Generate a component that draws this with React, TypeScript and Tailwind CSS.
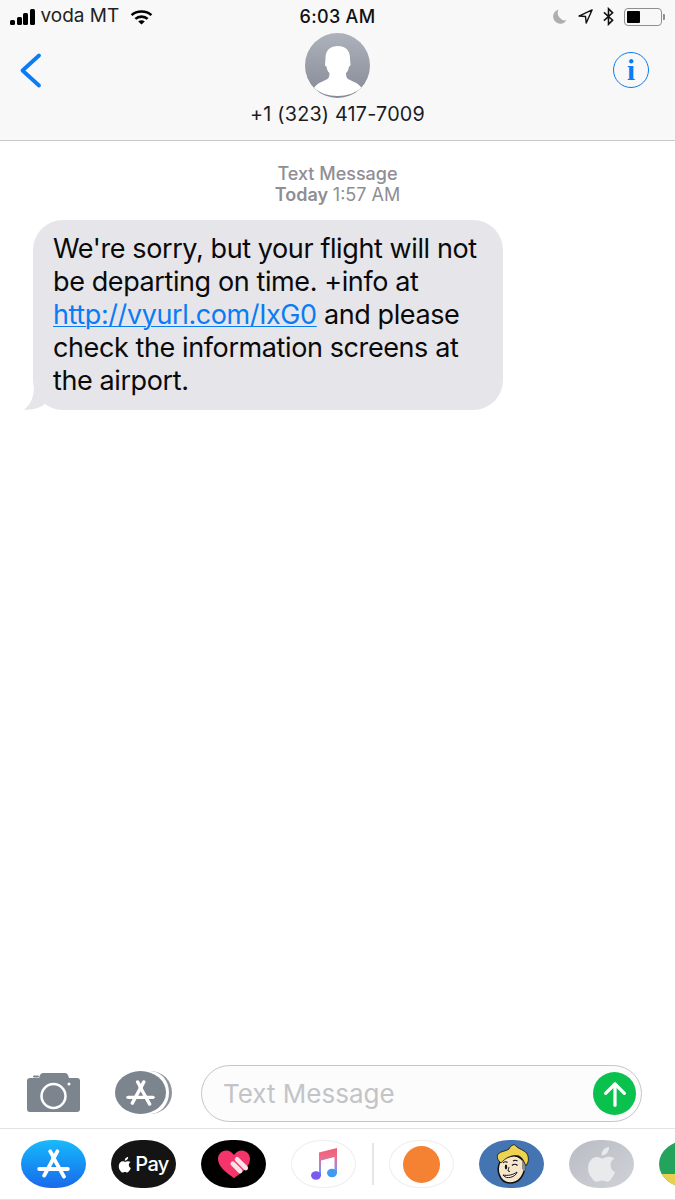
const sans = "font-['Inter','Liberation_Sans',sans-serif]";

const applePath =
  "M11 1c.1 1.2-.4 2.200-1 3-.7.8-1.700 1.300-2.700 1.200C7.200 4.100 7.700 3 8.300 2.300 9 1.500 10.100 1 11 1zM13.700 6.800c-1.500.9-1.900 2.100-1.900 3.300 0 1.500.8 2.800 2.200 3.400-.4 1.100-.9 2.100-1.600 3.100-.7.9-1.300 1.800-2.400 1.800-1 0-1.400-.6-2.600-.6s-1.600.6-2.600.6c-1.100 0-1.800-1-2.500-2C1 15 .3 12.800.6 10.600.9 8 2.800 6 5 6c1.100 0 2 .7 2.800.7.7 0 1.700-.8 3-.8 1.100 0 2.200.3 2.900.9z";

function AppStoreGlyph({ className = "" }: { className?: string }) {
  return (
    <svg viewBox="0 0 30 27" className={className} fill="none" stroke="currentColor" strokeWidth="3.5" strokeLinecap="round">
      <path d="M12 2 L15.500 8" />
      <path d="M18.500 2 L6.500 24" />
      <path d="M14.500 7 L24.500 25" />
      <path d="M2 18 H28" />
    </svg>
  );
}

function StatusBar() {
  return (
    <div className="flex h-[33px] items-center justify-between px-[10px] text-black">
      <div className="flex w-[200px] items-center">
        <div className="flex items-end gap-[1.5px]">
          <span className="h-[5px] w-[5px] rounded-[1.5px] bg-black" />
          <span className="h-[8px] w-[5px] rounded-[1.5px] bg-black" />
          <span className="h-[12px] w-[5px] rounded-[1.5px] bg-black" />
          <span className="h-[16px] w-[5px] rounded-[1.5px] bg-black" />
        </div>
        <span className="ml-[6px] text-[19px] text-[#222]">voda MT</span>
        <svg viewBox="0 0 24 17" className="ml-[11px] h-[16px] w-[23px]" fill="none" stroke="black" strokeWidth="2.800">
          <path d="M1.500 6.500C7 1.300 17 1.300 22.500 6.500" />
          <path d="M5.500 10.500C9 7.300 15 7.300 18.500 10.500" />
          <path d="M8.500 13.200l3.500 3.300 3.500-3.300c-2-1.700-5-1.700-7 0z" fill="black" stroke="none" />
        </svg>
      </div>
      <span className="text-[18px] font-medium tracking-[0.3px] text-[#111]">6:03 AM</span>
      <div className="flex w-[200px] items-center justify-end">
        <svg viewBox="0 0 16 16" className="h-[15px] w-[15px]" fill="#aeaeb0">
          <path d="M7 .5A7.700 7.700 0 1 0 15.500 12 8 8 0 0 1 7 .5z" />
        </svg>
        <svg viewBox="0 0 16 16" className="ml-[11px] h-[15px] w-[15px]" fill="none" stroke="#111" strokeWidth="1.500" strokeLinejoin="round">
          <path d="M15 1 L1 7.500 L8 8 L8.800 15 Z" />
        </svg>
        <svg viewBox="0 0 12 20" className="ml-[10px] h-[19px] w-[11px]" fill="none" stroke="#111" strokeWidth="1.700">
          <path d="M1 5.500 L10.500 14 L6 18.500 V1.500 L10.500 6 L1 14.500" />
        </svg>
        <div className="ml-[10px] flex h-[18px] w-[38px] items-center rounded-[4px] border border-[#8e8e8e] p-[2px]">
          <span className="h-full w-[13px] rounded-[1px] bg-black" />
        </div>
        <span className="ml-[1px] h-[6px] w-[2px] rounded-r-[1px] bg-[#8e8e8e]" />
      </div>
    </div>
  );
}

function Header() {
  return (
    <header className="relative h-[141px] shrink-0 border-b border-[#c9c9cb] bg-[#f8f8f8]">
      <StatusBar />
      <div className="flex flex-col items-center">
        <div className="relative h-[65px] w-[65px] overflow-hidden rounded-full bg-gradient-to-b from-[#aeb2bc] to-[#858a96]">
          <svg viewBox="0 0 65 65" className="h-full w-full" fill="white">
            <path d="M33 13c7 0 12 4 12 12 0 3 .5 5 .5 6.500s-1 1.500-1.500 2c-.5 3-1 5-3 6.500 0 3 .5 5 2 6 3 2 8 3 11 6 1 1 2 2 2.500 3C50 60 42 63 32.500 63S15 60 9 55c.5-1 1.500-2 2.500-3 3-3 8-4 11-6 1.500-1 2-3 2-6-2-1.500-2.500-3.500-3-6.500-.5-.5-1.500-.5-1.500-2s.5-3.500.5-6.500c0-8 5-12 12.500-12z" />
          </svg>
        </div>
        <span className="mt-[5px] text-[19.8px] leading-[23px] tracking-[0.2px] text-[#1c1c1e]">+1 (323) 417-7009</span>
      </div>
      <svg viewBox="0 0 24 38" className="absolute left-[18px] top-[52px] h-[38px] w-[24px]" fill="none" stroke="#0a7cf5" strokeWidth="3.800" strokeLinecap="round" strokeLinejoin="round">
        <path d="M21 3.500 L4.500 18.500 L21 33.500" />
      </svg>
      <div className="absolute left-[613px] top-[52px] flex h-[36px] w-[36px] items-center justify-center rounded-full border-[1.5px] border-[#0a7cf5]">
        <span className="font-['Liberation_Serif',serif] text-[29px] font-bold leading-none text-[#0a7cf5]">i</span>
      </div>
    </header>
  );
}

function Message() {
  return (
    <main className="flex-1 bg-white">
      <div className="pt-[22px] text-center text-[18px] font-medium leading-[21px] text-[#8e8e93]">
        <p>Text Message</p>
        <p>
          <span className="font-semibold">Today</span> <span className="font-normal">1:57 AM</span>
        </p>
      </div>
      <div className="relative ml-[33px] mt-[15px] h-[190px] w-[470px] rounded-[30px] bg-[#e5e5ea] pl-[20px] pt-[12px] text-[27px] leading-[33px] text-[#0a0a0a]">
        <svg viewBox="0 0 24 24" className="absolute bottom-0 left-[-9px] h-[24px] w-[24px]" fill="#e5e5ea">
          <path d="M10 0 C10 10 7 19 0 23.500 C8 24.500 15 22 20 19 L24 0 Z" />
        </svg>
        <p className="relative tracking-[-0.4px]">
          We're sorry, but your flight will not
          <br />
          be departing on time. +info at
          <br />
          <span className="text-[#0a7cf5] underline decoration-1 underline-offset-2">http://vyurl.com/IxG0</span> and please
          <br />
          check the information screens at
          <br />
          the airport.
        </p>
      </div>
    </main>
  );
}

function Composer() {
  return (
    <div className="flex h-[87px] shrink-0 items-start border-b border-[#e3e3e5] bg-white pt-[23px]">
      <svg viewBox="0 0 53 40" className="ml-[27px] mt-[7px] h-[40px] w-[53px]">
        <path fill="#7c848e" d="M3 6h9l1-3q1-2 3-2h22q2 0 3 2l1 3h8q3 0 3 3v28q0 3-3 3H3q-3 0-3-3V9q0-3 3-3z" />
        <circle cx="26.500" cy="24" r="12" fill="none" stroke="white" strokeWidth="2.500" />
        <rect x="6" y="3.500" width="6" height="2" rx="1" fill="#7c848e" />
        <circle cx="42" cy="12" r="1.500" fill="white" />
      </svg>
      <div className="relative ml-[35px] mt-[6px] h-[43px] w-[57px]">
        <span className="absolute left-[14px] top-0 h-[43px] w-[43px] rounded-full border-r-[3px] border-[#8d949d]" />
        <span className="absolute left-0 top-0 flex h-[43px] w-[51px] items-center justify-center rounded-[50%] bg-[#7c848e] text-white">
          <AppStoreGlyph className="h-[26px] w-[29px]" />
        </span>
      </div>
      <div className="ml-[29px] flex h-[57px] w-[441px] items-center justify-between rounded-[28.5px] border-[1.5px] border-[#c6c6ca] bg-[#fcfcfc] pl-[21px] pr-[5px]">
        <span className="text-[26px] text-[#c3c4c7]">Text Message</span>
        <span className="flex h-[43px] w-[43px] items-center justify-center rounded-full bg-[#0ac14d]">
          <svg viewBox="0 0 24 24" className="h-[30px] w-[30px]" fill="none" stroke="white" strokeWidth="2.600" strokeLinecap="round" strokeLinejoin="round">
            <path d="M12 21V4" />
            <path d="M4.500 11.500 12 4l7.500 7.500" />
          </svg>
        </span>
      </div>
    </div>
  );
}

function AppPill({ className, children }: { className: string; children?: React.ReactNode }) {
  return <div className={`flex h-[48px] w-[65px] shrink-0 items-center justify-center overflow-hidden rounded-[30px/24px] ${className}`}>{children}</div>;
}

function AppStrip() {
  return (
    <div className="flex h-[71px] shrink-0 items-start overflow-hidden border-b border-[#e3e3e5] bg-white pl-[21px] pt-[11px]">
      <div className="flex items-center gap-[25px]">
        <AppPill className="bg-gradient-to-b from-[#1cb9fb] to-[#1c68ea] text-white">
          <AppStoreGlyph className="h-[30px] w-[33px]" />
        </AppPill>
        <AppPill className="bg-[#141414] text-white">
          <svg viewBox="0 0 15 19" className="h-[17px] w-[14px]" fill="white">
            <path d={applePath} />
          </svg>
          <span className="ml-[3px] text-[20px] font-medium leading-none tracking-[-0.6px]">Pay</span>
        </AppPill>
        <AppPill className="bg-black">
          <svg viewBox="0 0 34 30" className="h-[29px] w-[32px]">
            <path fill="#f5346b" d="M17 29.500C9 24 0 17.500 0 9 0 3.800 3.800 0 8.600 0 12 0 15.200 1.800 17 5c1.800-3.200 5-5 8.400-5C30.200 0 34 3.800 34 9c0 8.500-9 15-17 20.500z" />
            <g transform="rotate(45 21 18)">
              <rect x="12" y="10" width="18" height="5" rx="2.500" fill="#f8e3e8" />
              <rect x="12" y="16.500" width="16" height="5" rx="2.500" fill="#f8e3e8" />
            </g>
          </svg>
        </AppPill>
        <AppPill className="border border-[#eeeef0] bg-white">
          <svg viewBox="0 0 26 32" className="h-[32px] w-[26px]">
            <defs>
              <linearGradient id="note" x1="0" y1="0" x2="0" y2="1">
                <stop offset="0" stopColor="#f55a71" />
                <stop offset="0.35" stopColor="#e8708f" />
                <stop offset="0.75" stopColor="#8f8ceb" />
                <stop offset="1" stopColor="#4a9cf2" />
              </linearGradient>
            </defs>
            <path fill="url(#note)" d="M8 4.500 26 0v25h-2.500V9L10 12.500V28H8z" />
            <ellipse cx="5" cy="27.500" rx="5" ry="4.200" fill="#7a5bf0" />
            <ellipse cx="21" cy="25" rx="5" ry="4.200" fill="#3f9bf0" />
          </svg>
        </AppPill>
      </div>
      <div className="ml-[16px] mt-[3px] h-[42px] w-[2px] shrink-0 bg-[#e6e6ea]" />
      <div className="ml-[15px] flex items-center gap-[25px]">
        <AppPill className="border border-[#eeeef0] bg-white">
          <span className="h-[37px] w-[37px] rounded-full bg-[#f58233]" />
        </AppPill>
        <AppPill className="bg-[#4474b2]">
          <svg viewBox="0 0 65 48" className="h-[48px] w-[65px]">
            <path fill="#f7e6cb" stroke="#111" strokeWidth="1.500" d="M21 22C17 29 20 43 31 43c9 0 13-6 15-15 0-8-6-13-13-12-6 1-10 3-12 6z" />
            <path fill="#8b8f8c" d="M43 20l4 4-1 7-3-2z" />
            <path fill="#eed34e" stroke="#111" strokeWidth="0.800" d="M19 14c3-3 9-3 11-5 1-3 5-5 6-4 2 3 6 4 9 6 4 2 5 7 4 11l-2 4c-2-4-3-8-7-10-6-2-14 2-18 7l-2-2c-2-2-2-5-1-7z" />
            <ellipse cx="27" cy="27" rx="1.200" ry="2.400" fill="#111" />
            <path d="M24 23c1-1.500 3-1.800 4.500-.5M33 25.500c1.500-1.500 4-1.500 5.500 0M34 21c1.500-1 3-1 4.500 0" fill="none" stroke="#111" strokeWidth="1.100" />
            <path d="M30 27l-1 4 2 .5" fill="none" stroke="#111" strokeWidth="0.900" />
            <path d="M24 35c5 1 10 0 14-3-1 5-11 8-14 3z" fill="#fff" stroke="#111" strokeWidth="1" />
          </svg>
        </AppPill>
        <AppPill className="bg-gradient-to-br from-[#b9bcc3] to-[#cfd2d7]">
          <svg viewBox="0 0 15 19" className="h-[38px] w-[30px]" fill="#e9eaec">
            <path d={applePath} />
          </svg>
        </AppPill>
        <AppPill className="relative bg-[#23a35c]">
          <span className="absolute bottom-0 left-0 h-[14px] w-[16px] bg-[#e8cf4d]" />
        </AppPill>
      </div>
    </div>
  );
}

export default function App() {
  return (
    <div className={`flex h-[1200px] w-[675px] flex-col overflow-hidden bg-white ${sans}`}>
      <Header />
      <Message />
      <Composer />
      <AppStrip />
    </div>
  );
}
